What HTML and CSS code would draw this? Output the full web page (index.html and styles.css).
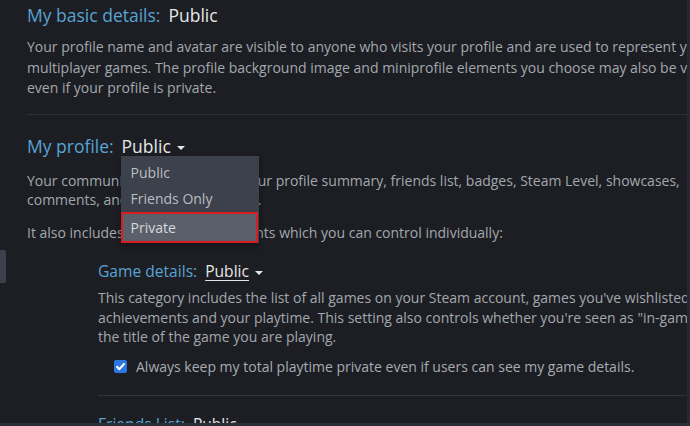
FILE: index.html
```html
<!DOCTYPE html>
<html>
<head>
<meta charset="utf-8">
<link rel="stylesheet" href="styles.css">
</head>
<body>
<div class="page">
  <section class="sec">
    <h2 class="head"><span class="label">My basic details:</span><span class="val">Public</span></h2>
    <p class="desc">
      <span class="ln">Your profile name and avatar are visible to anyone who visits your profile and are used to represent you in</span>
      <span class="ln">multiplayer games. The profile background image and miniprofile elements you choose may also be visible</span>
      <span class="ln">even if your profile is private.</span>
    </p>
  </section>
  <hr class="sep">
  <section class="sec">
    <h2 class="head"><span class="label">My profile:</span><span class="dd"><span class="link">Public</span><span class="caret"></span>
      <span class="menu">
        <span class="opt">Public</span>
        <span class="opt">Friends Only</span>
        <span class="opt sel">Private</span>
      </span></span></h2>
    <p class="desc desc2">
      <span class="ln">Your community profile includes your profile summary, friends list, badges, Steam Level, showcases,</span>
      <span class="ln">comments, and group membership.</span>
    </p>
    <p class="desc desc3">
      <span class="ln">It also includes the following elements which you can control individually:</span>
    </p>
    <div class="sub">
      <h3 class="subhead"><span class="label">Game details:</span><span class="dd"><span class="link">Public</span><span class="caret"></span></span></h3>
      <p class="desc desc4">
        <span class="ln">This category includes the list of all games on your Steam account, games you've wishlisted, your</span>
        <span class="ln">achievements and your playtime. This setting also controls whether you're seen as "in-game" and</span>
        <span class="ln">the title of the game you are playing.</span>
      </p>
      <label class="check"><span class="box"><svg viewBox="0 0 13 13" width="13" height="13"><path d="M3 6.8 L5.4 9.2 L10 4" fill="none" stroke="#fff" stroke-width="2" stroke-linecap="round" stroke-linejoin="round"/></svg></span><span class="ctext">Always keep my total playtime private even if users can see my game details.</span></label>
      <hr class="sep sep2">
      <h3 class="subhead"><span class="label">Friends List:</span><span class="dd"><span class="link">Public</span><span class="caret"></span></span></h3>
    </div>
  </section>
</div>
<div class="scroll-thumb"></div>
<div class="edge-right"></div>
<div class="edge-bottom"></div>
</body>
</html>
```

FILE: styles.css
```css
html, body {
  margin: 0;
  padding: 0;
  background: #1c1e23;
  overflow: hidden;
  width: 690px;
  height: 426px;
}
body {
  font-family: "Open Sans", "Liberation Sans", Arial, sans-serif;
  color: #a3a8ae;
  position: relative;
}
.page {
  padding: 3px 0 0 27px;
  width: 760px;
}
.head {
  margin: 0;
  font-size: 17.5px;
  font-weight: normal;
  line-height: 24px;
  height: 24px;
  white-space: nowrap;
}
.label {
  color: #58a3d4;
}
.val {
  color: #e4e6e8;
  margin-left: 8px;
}
.link {
  color: #e4e6e8;
  text-decoration: underline;
  text-underline-offset: 3px;
  text-decoration-thickness: 1px;
}
.dd {
  position: relative;
  display: inline-block;
  margin-left: 8px;
}
.caret {
  display: inline-block;
  width: 0;
  height: 0;
  border-left: 4px solid transparent;
  border-right: 4px solid transparent;
  border-top: 4px solid #e4e6e8;
  margin-left: 6px;
  vertical-align: middle;
}
.desc {
  margin: 10px 0 0;
  font-size: 14px;
  line-height: 20.5px;
}
.ln {
  display: block;
  white-space: nowrap;
}
.sep {
  border: 0;
  height: 1px;
  background: #2d323a;
  margin: 15px 0 19px;
}
.desc2 { margin-top: 13px; line-height: 19.5px; }
.desc3 { margin-top: 13px; }
.sub {
  padding-left: 71px;
}
.subhead {
  margin: 17px 0 0;
  font-size: 15.6px;
  font-weight: normal;
  line-height: 22px;
  height: 22px;
  white-space: nowrap;
}
.subhead .dd { margin-left: 8px; }
.desc4 {
  margin-top: 6px;
  line-height: 19.5px;
}
.check {
  display: flex;
  align-items: center;
  margin: 10px 0 0 16px;
  height: 20px;
  font-size: 14px;
  white-space: nowrap;
}
.box {
  width: 13px;
  height: 13px;
  border-radius: 2px;
  background: #2c78e0;
  display: inline-flex;
  margin-right: 9px;
}
.box svg { display: block; }
.ctext { color: #a7acb2; }
.sep2 {
  margin: 18px 0 14px;
  background: #30343b;
}
.menu {
  position: absolute;
  left: -1px;
  top: 22px;
  width: 138px;
  height: 87px;
  box-sizing: border-box;
  background: #3c414b;
  padding-top: 4px;
  display: flex;
  flex-direction: column;
  box-shadow: 0 2px 6px rgba(0,0,0,0.4);
}
.opt {
  display: block;
  height: 26px;
  line-height: 26px;
  padding-left: 10px;
  font-size: 14px;
  color: #b9bec4;
}
.opt.sel {
  height: 31px;
  line-height: 27px;
  box-sizing: border-box;
  border: 2px solid #d81d22;
  padding-left: 8px;
  background: #5a606a;
  color: #d6dade;
  width: 137px;
}
.scroll-thumb {
  position: absolute;
  left: 0;
  top: 250px;
  width: 6px;
  height: 33px;
  background: #3b404b;
  border-radius: 0 2px 2px 0;
}
.edge-right {
  position: absolute;
  right: 0;
  top: 0;
  width: 3px;
  height: 426px;
  background: #26292f;
}
.edge-bottom {
  position: absolute;
  left: 0;
  bottom: 0;
  width: 690px;
  height: 3px;
  background: #2b2f37;
}
```
